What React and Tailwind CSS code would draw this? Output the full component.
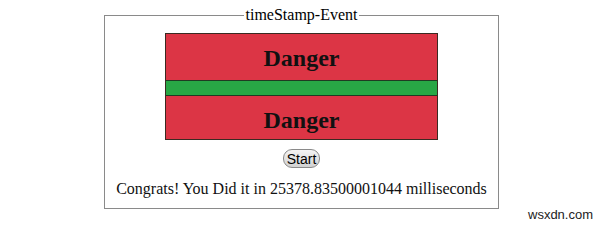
export default function App() {
  return (
    <div className="relative w-[600px] h-[225px] bg-white" style={{ fontFamily: '"Liberation Serif", "Times New Roman", serif' }}>
      <div className="pt-[6px] pl-[104px]">
        <fieldset className="w-[395px] h-[203px] border border-[#8a8a8a] px-0 pb-0">
          <legend className="mx-auto px-[2px] text-[16px] leading-[18px] text-black">timeStamp-Event</legend>
          <div className="flex flex-col items-center pt-[9px]">
            <div className="w-[273px] border border-[#3b2a22] flex flex-col">
              <div className="h-[46px] bg-[#dc3545] flex items-center justify-center">
                <h2 className="text-[24px] font-bold leading-none text-[#111] translate-y-[1px]">Danger</h2>
              </div>
              <div className="h-[16px] bg-[#28a745] border-y border-[#1f3b22]" />
              <div className="h-[43px] bg-[#dc3545] flex items-center justify-center">
                <h2 className="text-[24px] font-bold leading-none text-[#111] translate-y-[2px]">Danger</h2>
              </div>
            </div>
            <button
              className="mt-[9px] h-[19px] px-[3px] rounded-[9px] border border-[#8a8a8a] bg-gradient-to-b from-[#f4f4f4] to-[#d2d2d2] text-[14px] leading-none text-black"
              style={{ fontFamily: '"Liberation Sans", Arial, sans-serif' }}
            >
              Start
            </button>
            <p className="mt-[12px] text-[16px] leading-[18px] text-[#111]">
              Congrats! You Did it in 25378.83500001044 milliseconds
            </p>
          </div>
        </fieldset>
      </div>
      <span
        className="absolute left-[528px] top-[205px] text-[13px] text-[#222]"
        style={{ fontFamily: '"Liberation Sans", Arial, sans-serif' }}
      >
        wsxdn.com
      </span>
    </div>
  );
}
